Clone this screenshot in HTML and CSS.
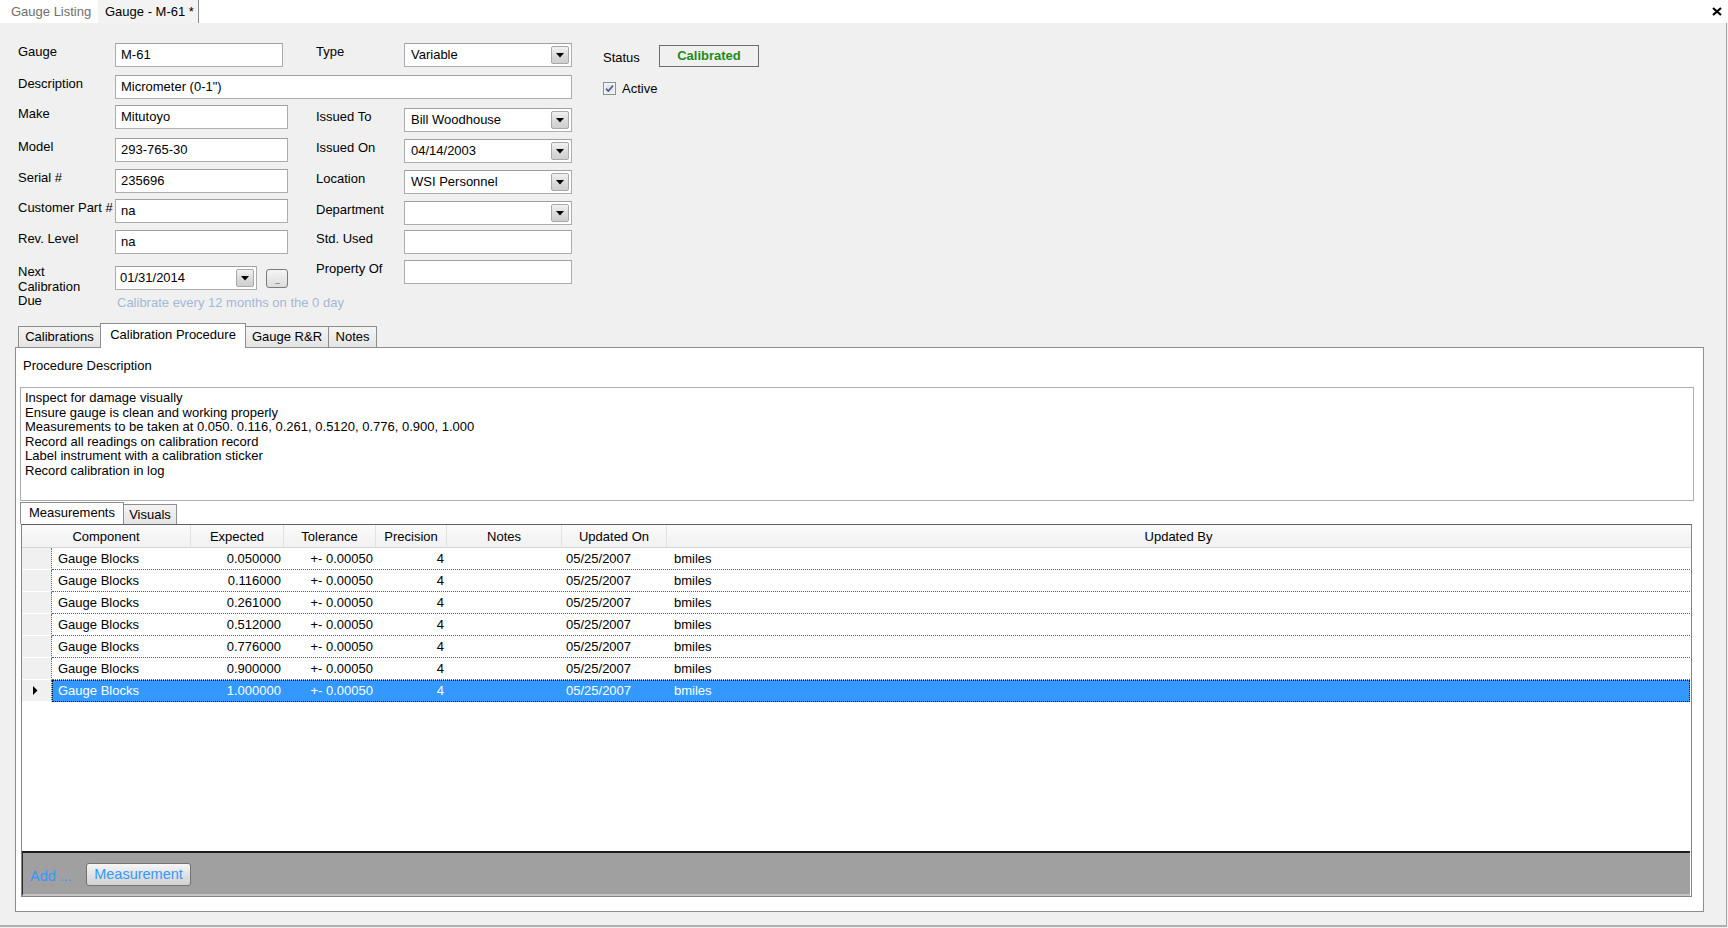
FILE: index.html
```html
<!DOCTYPE html>
<html>
<head>
<meta charset="utf-8">
<title>Gauge - M-61</title>
<link rel="stylesheet" href="styles.css">
</head>
<body>
<div class="app">
  <div class="doctabs">
    <div class="doctab">Gauge Listing</div>
    <div class="doctab active">Gauge - M-61 *</div>
    <svg class="close" width="10" height="9" viewBox="0 0 10 9"><path d="M1 1 L9 8 M9 1 L1 8" stroke="#000" stroke-width="2.2" fill="none"/></svg>
  </div>
  <div class="main">
    <div class="form">
      <div class="lbl r1 c1">Gauge</div>
      <div class="inp r1 c2 short">M-61</div>
      <div class="lbl r1 c4">Type</div>
      <div class="combo r1 c5"><span class="val">Variable</span><span class="dd"><svg width="8" height="5" viewBox="0 0 8 5"><path d="M0 0 H8 L4 4.5 Z" fill="#000"/></svg></span></div>
      <div class="status r1 c7"><span class="status-lbl">Status</span><span class="badge">Calibrated</span></div>

      <div class="lbl r2 c1">Description</div>
      <div class="inp r2 cdesc">Micrometer (0-1")</div>
      <div class="chk r2 c7"><svg width="13" height="13" viewBox="0 0 13 13"><rect x="0.5" y="0.5" width="12" height="12" fill="#f4f4f4" stroke="#8e8f8f"/><rect x="2.5" y="2.5" width="8" height="8" fill="#e4e6ea"/><path d="M3 6.6 L5.3 9 L10 3.6" stroke="#4a5d8f" stroke-width="1.6" fill="none"/></svg><span>Active</span></div>

      <div class="lbl r3 c1">Make</div>
      <div class="inp r3 c2">Mitutoyo</div>
      <div class="lbl r3 c4 o3">Issued To</div>
      <div class="combo r3 c5 o3"><span class="val">Bill Woodhouse</span><span class="dd"><svg width="8" height="5" viewBox="0 0 8 5"><path d="M0 0 H8 L4 4.5 Z" fill="#000"/></svg></span></div>

      <div class="lbl r4 c1">Model</div>
      <div class="inp r4 c2">293-765-30</div>
      <div class="lbl r4 c4 o1">Issued On</div>
      <div class="combo r4 c5 o1"><span class="val">04/14/2003</span><span class="dd"><svg width="8" height="5" viewBox="0 0 8 5"><path d="M0 0 H8 L4 4.5 Z" fill="#000"/></svg></span></div>

      <div class="lbl r5 c1">Serial #</div>
      <div class="inp r5 c2">235696</div>
      <div class="lbl r5 c4 o1">Location</div>
      <div class="combo r5 c5 o1"><span class="val">WSI Personnel</span><span class="dd"><svg width="8" height="5" viewBox="0 0 8 5"><path d="M0 0 H8 L4 4.5 Z" fill="#000"/></svg></span></div>

      <div class="lbl r6 c1">Customer Part #</div>
      <div class="inp r6 c2">na</div>
      <div class="lbl r6 c4 o2">Department</div>
      <div class="combo r6 c5 o2"><span class="val"></span><span class="dd"><svg width="8" height="5" viewBox="0 0 8 5"><path d="M0 0 H8 L4 4.5 Z" fill="#000"/></svg></span></div>

      <div class="lbl r7 c1">Rev. Level</div>
      <div class="inp r7 c2">na</div>
      <div class="lbl r7 c4">Std. Used</div>
      <div class="inp r7 c5"></div>

      <div class="lbl lbl-multi r89 c1">Next<br>Calibration<br>Due</div>
      <div class="datewrap r8 c2">
        <div class="combo date"><span class="val">01/31/2014</span><span class="dd"><svg width="8" height="5" viewBox="0 0 8 5"><path d="M0 0 H8 L4 4.5 Z" fill="#000"/></svg></span></div>
        <div class="dots">...</div>
      </div>
      <div class="lbl r8 c4 om3">Property Of</div>
      <div class="inp r8 c5 om3"></div>

      <div class="hint r9 chint">Calibrate every 12 months on the 0 day</div>
    </div>

    <div class="tabs">
      <div class="tabstrip">
        <div class="tab w-cal">Calibrations</div>
        <div class="tab sel w-proc">Calibration Procedure</div>
        <div class="tab w-rr">Gauge R&amp;R</div>
        <div class="tab w-notes">Notes</div>
      </div>
      <div class="panel">
        <div class="proc-label">Procedure Description</div>
        <div class="textarea">
          <div>Inspect for damage visually</div>
          <div>Ensure gauge is clean and working properly</div>
          <div>Measurements to be taken at 0.050. 0.116, 0.261, 0.5120, 0.776, 0.900, 1.000</div>
          <div>Record all readings on calibration record</div>
          <div>Label instrument with a calibration sticker</div>
          <div>Record calibration in log</div>
        </div>
        <div class="subtabs">
          <div class="subtab sel">Measurements</div>
          <div class="subtab">Visuals</div>
        </div>
        <div class="grid">
          <div class="ghead">
            <div class="h h-comp">Component</div>
            <div class="h w-exp">Expected</div>
            <div class="h w-tol">Tolerance</div>
            <div class="h w-prec">Precision</div>
            <div class="h w-notes2">Notes</div>
            <div class="h w-upon">Updated On</div>
            <div class="h w-upby">Updated By</div>
          </div>
          <div class="row"><div class="rh"></div><div class="cells"><div class="c w-comp">Gauge Blocks</div><div class="c w-exp num">0.050000</div><div class="c w-tol num">+- 0.00050</div><div class="c w-prec num">4</div><div class="c w-notes2"></div><div class="c w-upon">05/25/2007</div><div class="c w-upby">bmiles</div></div></div>
          <div class="row"><div class="rh"></div><div class="cells"><div class="c w-comp">Gauge Blocks</div><div class="c w-exp num">0.116000</div><div class="c w-tol num">+- 0.00050</div><div class="c w-prec num">4</div><div class="c w-notes2"></div><div class="c w-upon">05/25/2007</div><div class="c w-upby">bmiles</div></div></div>
          <div class="row"><div class="rh"></div><div class="cells"><div class="c w-comp">Gauge Blocks</div><div class="c w-exp num">0.261000</div><div class="c w-tol num">+- 0.00050</div><div class="c w-prec num">4</div><div class="c w-notes2"></div><div class="c w-upon">05/25/2007</div><div class="c w-upby">bmiles</div></div></div>
          <div class="row"><div class="rh"></div><div class="cells"><div class="c w-comp">Gauge Blocks</div><div class="c w-exp num">0.512000</div><div class="c w-tol num">+- 0.00050</div><div class="c w-prec num">4</div><div class="c w-notes2"></div><div class="c w-upon">05/25/2007</div><div class="c w-upby">bmiles</div></div></div>
          <div class="row"><div class="rh"></div><div class="cells"><div class="c w-comp">Gauge Blocks</div><div class="c w-exp num">0.776000</div><div class="c w-tol num">+- 0.00050</div><div class="c w-prec num">4</div><div class="c w-notes2"></div><div class="c w-upon">05/25/2007</div><div class="c w-upby">bmiles</div></div></div>
          <div class="row"><div class="rh"></div><div class="cells"><div class="c w-comp">Gauge Blocks</div><div class="c w-exp num">0.900000</div><div class="c w-tol num">+- 0.00050</div><div class="c w-prec num">4</div><div class="c w-notes2"></div><div class="c w-upon">05/25/2007</div><div class="c w-upby">bmiles</div></div></div>
          <div class="row selected"><div class="rh"><svg width="5" height="9" viewBox="0 0 5 9"><path d="M0 0 L4.5 4.5 L0 9 Z" fill="#000"/></svg></div><div class="cells"><div class="c w-comp">Gauge Blocks</div><div class="c w-exp num">1.000000</div><div class="c w-tol num">+- 0.00050</div><div class="c w-prec num">4</div><div class="c w-notes2"></div><div class="c w-upon">05/25/2007</div><div class="c w-upby">bmiles</div></div></div>
          <div class="gfill"></div>
          <div class="gfooter">
            <span class="add">Add ...</span>
            <span class="mbtn">Measurement</span>
          </div>
        </div>
      </div>
    </div>
  </div>
</div>
</body>
</html>
```
FILE: styles.css
```css
* { box-sizing: border-box; }
html, body { margin: 0; padding: 0; }
body {
  font-family: "Liberation Sans", Arial, sans-serif;
  font-size: 13px;
  color: #000;
  background: #f0f0f0;
}
.app {
  width: 1728px;
  height: 928px;
  overflow: hidden;
  background: #f0f0f0;
}

/* document tabs */
.doctabs {
  height: 23px;
  background: #fff;
  display: flex;
  align-items: stretch;
}
.doctab {
  line-height: 23px;
  width: 98px;
  padding-left: 11px;
  color: #6f6f6f;
  white-space: nowrap;
}
.doctab.active {
  width: 101px;
  padding-left: 7px;
  color: #000;
  background: #f3f3f3;
  border-right: 1px solid #8c8c8c;
}
.close {
  margin-left: auto;
  margin-right: 6px;
  margin-top: 7px;
}

/* main area */
.main {
  width: 1727px;
  height: 904px;
  border-right: 1px solid #a3a3a3;
  border-bottom: 2px solid #b0b0b0;
  padding-top: 20px;
}

/* header form */
.form {
  display: grid;
  margin-left: 18px;
  grid-template-columns: 97px 173px 28px 88px 168px 31px 220px;
  grid-template-rows: 32px 30px 33px 31px 30px 31px 33px 28px 16px;
}
.r1 { grid-row: 1; }
.r2 { grid-row: 2; }
.r3 { grid-row: 3; }
.r4 { grid-row: 4; }
.r5 { grid-row: 5; }
.r6 { grid-row: 6; }
.r7 { grid-row: 7; }
.r8 { grid-row: 8; }
.r9 { grid-row: 9; }
.r89 { grid-row: 8 / span 2; }
.c1 { grid-column: 1; }
.c2 { grid-column: 2; }
.c4 { grid-column: 4; }
.c5 { grid-column: 5; }
.c7 { grid-column: 7; }
.cdesc { grid-column: 2 / 6; }
.chint { grid-column: 2 / 6; }
.o1 { margin-top: 1px; }
.o2 { margin-top: 2px; }
.o3 { margin-top: 3px; }
.om3 { margin-top: -3px; }

.lbl {
  align-self: start;
  padding-top: 1px;
  line-height: 15px;
  white-space: nowrap;
}
.lbl-multi {
  padding-top: 2px;
  line-height: 14.5px;
}
.inp {
  align-self: start;
  height: 24px;
  background: #fff;
  border: 1px solid #abadb3;
  border-top-color: #a0a0a0;
  padding-left: 5px;
  line-height: 22px;
  white-space: nowrap;
}
.inp.short { width: 168px; }

.combo {
  align-self: start;
  height: 24px;
  display: flex;
  background: #fff;
  border: 1px solid #abadb3;
  border-top-color: #a0a0a0;
}
.combo .val {
  flex: 1;
  padding-left: 6px;
  line-height: 22px;
  white-space: nowrap;
}
.combo .dd {
  width: 18px;
  margin: 2px;
  border: 1px solid #a9a9a9;
  border-radius: 2px;
  background: linear-gradient(#f2f2f2, #dadada 55%, #cfcfcf);
  display: flex;
  align-items: center;
  justify-content: center;
}
.datewrap {
  align-self: start;
  margin-top: 3px;
  display: flex;
  align-items: center;
  gap: 9px;
}
.combo.date {
  width: 142px;
  height: 24px;
  margin: 0;
}
.combo.date .val { padding-left: 4px; }
.dots {
  width: 22px;
  height: 19px;
  border: 1px solid #7a7a7a;
  border-radius: 3px;
  background: linear-gradient(#f4f4f4, #dcdcdc);
  color: #555;
  font-size: 9px;
  text-align: center;
  line-height: 22px;
  letter-spacing: -1px;
}
.hint {
  padding-top: 4px;
  padding-left: 2px;
  line-height: 15px;
  color: #a3b8d6;
  white-space: nowrap;
}

.status {
  display: flex;
  align-items: flex-start;
}
.status-lbl {
  width: 56px;
  padding-top: 7px;
  line-height: 15px;
}
.badge {
  width: 100px;
  height: 22px;
  margin-top: 2px;
  border: 1px solid #6c6c6c;
  text-align: center;
  line-height: 20px;
  font-weight: bold;
  color: #1b8c1b;
}
.chk {
  display: flex;
  align-items: center;
  gap: 6px;
  padding-top: 6px;
  align-self: start;
  line-height: 15px;
}
.chk svg { display: block; }

/* tab control */
.tabs {
  margin-top: 16px;
  margin-left: 15px;
  width: 1689px;
}
.tabstrip {
  display: flex;
  align-items: flex-end;
  height: 24px;
  padding-left: 3px;
  position: relative;
  z-index: 1;
}
.tab {
  height: 21px;
  border: 1px solid #8e8e8e;
  border-bottom: none;
  background: linear-gradient(#f4f4f4, #e4e4e4);
  text-align: center;
  line-height: 20px;
  margin-right: -1px;
  white-space: nowrap;
}
.tab.sel {
  height: 25px;
  margin-bottom: -1px;
  background: #fff;
  line-height: 22px;
  position: relative;
  z-index: 2;
}
.w-cal { width: 83px; }
.w-proc { width: 146px; }
.w-rr { width: 84px; }
.w-notes { width: 49px; }

.panel {
  height: 565px;
  border: 1px solid #8e8e8e;
  background: #fff;
  padding: 10px 0 0 4px;
}
.proc-label {
  line-height: 16px;
  padding-left: 3px;
}
.textarea {
  margin-top: 13px;
  width: 1674px;
  height: 114px;
  border: 1px solid #acacac;
  padding: 3px 4px 2px;
  line-height: 14.6px;
  white-space: nowrap;
}
.subtabs {
  display: flex;
  align-items: flex-end;
  height: 23px;
}
.subtab {
  height: 20px;
  width: 54px;
  border: 1px solid #8e8e8e;
  border-bottom: none;
  background: linear-gradient(#f4f4f4, #e4e4e4);
  text-align: center;
  line-height: 20px;
}
.subtab.sel {
  width: 104px;
  height: 22px;
  background: #fff;
  line-height: 19px;
  margin-right: -1px;
}

/* data grid */
.grid {
  margin-left: 1px;
  width: 1671px;
  height: 373px;
  border: 1px solid #858585;
  border-top-color: #5f5f5f;
  display: flex;
  flex-direction: column;
  background: #fff;
}
.ghead {
  display: flex;
  height: 23px;
  background: linear-gradient(#fbfbfb, #f1f1f2);
  border-bottom: 1px solid #d5d5d5;
}
.h {
  text-align: center;
  padding-top: 2px;
  line-height: 20px;
  border-right: 1px solid #e2e2e2;
  white-space: nowrap;
}
.h-comp { width: 169px; }
.w-comp { width: 139px; }
.w-exp { width: 93px; }
.w-tol { width: 92px; }
.w-prec { width: 71px; }
.w-notes2 { width: 115px; }
.w-upon { width: 105px; }
.w-upby { width: 1023px; }
.h.w-upby { border-right: none; }

.row {
  display: flex;
  height: 22px;
}
.rh {
  width: 30px;
  background: #f0f0f0;
  border-right: 1px dotted #6a6a6a;
  border-bottom: 1px solid #ffffff;
  display: flex;
  align-items: center;
  padding-left: 11px;
}
.cells {
  display: flex;
  width: 1638px;
  border-bottom: 1px dotted #5a5a5a;
}
.c {
  line-height: 21px;
  white-space: nowrap;
  overflow: hidden;
}
.c.w-comp { padding-left: 6px; }
.c.num { text-align: right; padding-right: 3px; }
.c.w-upon { padding-left: 4px; }
.c.w-upby { padding-left: 7px; }
.row.selected .cells {
  background: #3399ff;
  color: #fff;
  outline: 1px dotted #111;
  outline-offset: -1px;
}
.gfill { flex: 1; }
.gfooter {
  width: 1668px;
  height: 45px;
  background: #a0a0a0;
  border-top: 2px solid #1c1c1c;
  border-left: 1px solid #2a2a2a;
  border-bottom: 2px solid #c3c3c3;
  display: flex;
  align-items: center;
  padding: 2px 0 0 7px;
  font-size: 14.5px;
}
.add {
  color: #3399ff;
  width: 56px;
  padding-top: 3px;
}
.mbtn {
  width: 105px;
  height: 23px;
  border: 1px solid #737373;
  border-radius: 3px;
  background: linear-gradient(#f6f6f6, #e2e2e2 50%, #d2d2d2);
  color: #3399ff;
  text-align: center;
  line-height: 21px;
}
```
